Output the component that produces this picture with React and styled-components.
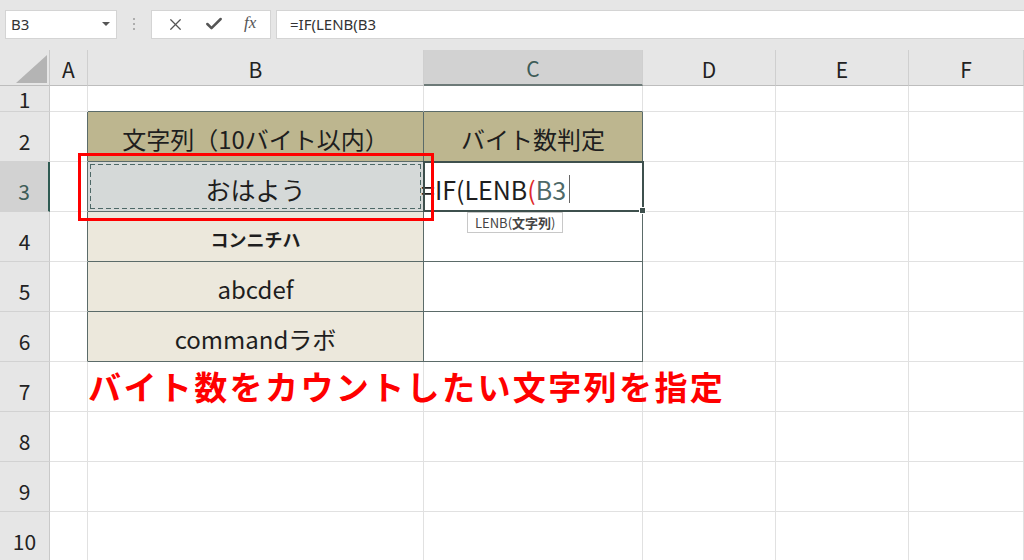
import styled, { createGlobalStyle } from "styled-components";
import { X, Check } from "lucide-react";

const GlobalStyle = createGlobalStyle`
  body {
    margin: 0;
    font-family: "Noto Sans CJK JP", "Noto Sans", sans-serif;
    overflow: hidden;
  }
`

const GRID = '#e1e1e1'
const DARK = '#5b6b69'

const Page = styled.div`
  width: 1024px;
  height: 560px;
  overflow: hidden;
  background: #ffffff;
`

const Toolbar = styled.div`
  height: 50px;
  background: #e6e6e6;
  display: flex;
  align-items: center;
  padding: 0 0 2px 5px;
  box-sizing: border-box;
`

const NameBox = styled.div`
  width: 112px;
  height: 29px;
  box-sizing: border-box;
  background: #fff;
  border: 1px solid #d4d4d4;
  display: flex;
  align-items: center;
  justify-content: space-between;
  padding: 0 6px 0 5px;
  font-family: "Noto Sans", sans-serif;
  font-size: 15px;
  color: #333;
`

const Caret = styled.span`
  width: 0;
  height: 0;
  border-left: 4px solid transparent;
  border-right: 4px solid transparent;
  border-top: 4px solid #555;
`

const Dots = styled.div`
  width: 34px;
  display: flex;
  flex-direction: column;
  align-items: center;
  gap: 3px;

  span {
    width: 2px;
    height: 2px;
    border-radius: 50%;
    background: #9a9a9a;
  }
`

const ButtonBox = styled.div`
  width: 120px;
  height: 29px;
  box-sizing: border-box;
  background: #fff;
  border: 1px solid #d4d4d4;
  display: flex;
  align-items: center;
  justify-content: space-around;
  padding: 0 4px;
  color: #555;
`

const Fx = styled.span`
  font-family: "Liberation Serif", serif;
  font-style: italic;
  font-size: 17px;
  color: #555;
  margin-top: -3px;
`

const FormulaBox = styled.div`
  flex: 1;
  height: 29px;
  margin-left: 5px;
  box-sizing: border-box;
  background: #fff;
  border: 1px solid #d4d4d4;
  border-right: none;
  display: flex;
  align-items: center;
  padding-left: 13px;
  font-family: "Noto Sans", sans-serif;
  font-size: 15px;
  color: #333;
`

const Sheet = styled.div`
  position: relative;
  display: grid;
  grid-template-columns: 50px 38px 336px 219px 133px 133px 1fr;
  grid-template-rows: 36px 26px repeat(9, 50px);
`

const Corner = styled.div`
  background: #e6e6e6;
  border-right: 1px solid #c9c9c9;
  border-bottom: 1px solid #bdbdbd;
  position: relative;

  &::after {
    content: "";
    position: absolute;
    right: 2px;
    bottom: 2px;
    border-left: 31px solid transparent;
    border-bottom: 28px solid #b4b4b4;
  }
`

const ColHead = styled.div`
  background: ${p => p.$on ? '#d2d2d2' : '#e6e6e6'};
  border-right: 1px solid #cfcfcf;
  border-bottom: ${p => p.$on ? '2px solid #6d7a78' : '1px solid #bdbdbd'};
  display: flex;
  align-items: center;
  justify-content: center;
  padding-top: 2px;
  font-size: 21px;
  color: ${p => p.$on ? '#3d5c57' : '#222'};
`

const RowHead = styled.div`
  background: ${p => p.$on ? '#d2d2d2' : '#e6e6e6'};
  border-right: ${p => p.$on ? '2px solid #2f5a52' : '1px solid #c9c9c9'};
  border-bottom: 1px solid #d2d2d2;
  display: flex;
  align-items: center;
  justify-content: center;
  padding-top: ${p => p.$small ? '0' : '8px'};
  font-size: 21px;
  color: ${p => p.$on ? '#3d5c57' : '#222'};
`

const fills = {
  plain: '#ffffff',
  head: '#bdb68f',
  body: '#ece8dc',
  picked: '#d5d9d8',
}

const Cell = styled.div`
  position: relative;
  background: ${p => fills[p.$fill || 'plain']};
  border-right: 1px solid ${p => p.$r || GRID};
  border-bottom: 1px solid ${p => p.$b || GRID};
  display: flex;
  align-items: center;
  justify-content: ${p => p.$left ? 'flex-start' : 'center'};
  padding-top: 4px;
  box-sizing: border-box;
  font-size: ${p => p.$size || 21}px;
  font-weight: ${p => p.$bold ? 700 : 400};
  color: #1e1e1e;
  white-space: nowrap;
  overflow: visible;
  z-index: ${p => p.$top ? 2 : 0};
`

/* marching ants of the copied cell */
const Ants = styled.div`
  position: absolute;
  inset: 2px 2px 2px 2px;
  pointer-events: none;
  background-image:
    repeating-linear-gradient(90deg, #4d6866 0 5px, transparent 5px 8px),
    repeating-linear-gradient(90deg, #4d6866 0 5px, transparent 5px 8px),
    repeating-linear-gradient(180deg, #4d6866 0 5px, transparent 5px 8px),
    repeating-linear-gradient(180deg, #4d6866 0 5px, transparent 5px 8px);
  background-size: 100% 1px, 100% 1px, 1px 100%, 1px 100%;
  background-position: top left, bottom left, top left, top right;
  background-repeat: no-repeat;
`

const Active = styled.div`
  position: absolute;
  inset: -1px -2px -1px -1px;
  border: 2px solid #3e504d;
  pointer-events: none;

  &::after {
    content: "";
    position: absolute;
    right: -4px;
    bottom: -4px;
    width: 5px;
    height: 5px;
    background: #3e504d;
    border: 1px solid #fff;
  }
`

const Formula = styled.span`
  font-size: 25px;
  color: #1e1e1e;
  margin-left: -3px;
  display: flex;
  align-items: center;
`

const Paren = styled.span`
  color: #e02a2a;
`

const Ref = styled.span`
  color: #4f6a69;
`

const Cursor = styled.span`
  width: 1px;
  height: 28px;
  background: #666;
  margin-left: 3px;
`

const Note = styled.span`
  color: #ff0000;
  font-size: 33px;
  font-weight: 700;
  letter-spacing: 2.4px;
  margin-top: -6px;
`

const Highlight = styled.div`
  position: absolute;
  left: 78px;
  top: 103px;
  width: 356px;
  height: 68px;
  box-sizing: border-box;
  border: 3px solid #ff0000;
  z-index: 5;
  pointer-events: none;
`

const Tip = styled.div`
  position: absolute;
  left: 467px;
  top: 162px;
  height: 21px;
  padding: 0 7px;
  box-sizing: border-box;
  background: #fff;
  border: 1px solid #c8c8c8;
  display: flex;
  align-items: center;
  font-family: "Noto Sans CJK JP", sans-serif;
  font-size: 13px;
  color: #444;
  z-index: 6;

  b {
    font-weight: 700;
  }
`

const columns = ['A', 'B', 'C', 'D', 'E', 'F']

const tableRows = [
  { n: 3, text: 'おはよう', size: 25 },
  { n: 4, text: 'コンニチハ', size: 18, bold: true },
  { n: 5, text: 'abcdef', size: 24 },
  { n: 6, text: 'commandラボ', size: 24 },
]

function PlainCells({ count, from = 0 }) {
  return Array.from({ length: count }, (_, i) => <Cell key={'p' + from + i} />)
}

export default function App() {
  return (
    <Page>
      <GlobalStyle />
      <Toolbar>
        <NameBox>B3<Caret /></NameBox>
        <Dots><span /><span /><span /></Dots>
        <ButtonBox>
          <X size={19} strokeWidth={1.6} />
          <Check size={20} strokeWidth={3} />
          <Fx>fx</Fx>
        </ButtonBox>
        <FormulaBox>=IF(LENB(B3</FormulaBox>
      </Toolbar>

      <Sheet>
        <Corner />
        {columns.map(c => <ColHead key={c} $on={c === 'C'}>{c}</ColHead>)}

        {/* row 1 */}
        <RowHead $small>1</RowHead>
        <Cell />
        <Cell $b={DARK} />
        <Cell $b={DARK} />
        <PlainCells count={3} from={1} />

        {/* row 2 */}
        <RowHead>2</RowHead>
        <Cell $r={DARK} />
        <Cell $fill="head" $r={DARK} $b={DARK} $size={24}>文字列（10バイト以内）</Cell>
        <Cell $fill="head" $r={DARK} $b={DARK} $size={24}>バイト数判定</Cell>
        <PlainCells count={3} from={2} />

        {tableRows.map(row => (
          <>
            <RowHead key={'h' + row.n} $on={row.n === 3}>{row.n}</RowHead>
            <Cell key={'a' + row.n} $r={DARK} />
            <Cell
              key={'b' + row.n}
              $fill={row.n === 3 ? 'picked' : 'body'}
              $r={DARK}
              $b={DARK}
              $size={row.size}
              $bold={row.bold}
            >
              {row.text}
              {row.n === 3 && <Ants />}
            </Cell>
            {row.n === 3 ? (
              <Cell key={'c' + row.n} $r={DARK} $b={DARK} $left $top>
                <Formula>=IF(LENB<Paren>(</Paren><Ref>B3</Ref><Cursor /></Formula>
                <Active />
              </Cell>
            ) : (
              <Cell key={'c' + row.n} $r={DARK} $b={DARK} />
            )}
            <PlainCells count={3} from={row.n * 10} />
          </>
        ))}

        {/* row 7 */}
        <RowHead>7</RowHead>
        <Cell />
        <Cell $left $top><Note>バイト数をカウントしたい文字列を指定</Note></Cell>
        <PlainCells count={4} from={70} />

        {[8, 9, 10].map(n => (
          <>
            <RowHead key={'h' + n}>{n}</RowHead>
            <PlainCells count={6} from={n * 10} />
          </>
        ))}

        <Highlight />
        <Tip>LENB(<b>文字列</b>)</Tip>
      </Sheet>
    </Page>
  )
}
